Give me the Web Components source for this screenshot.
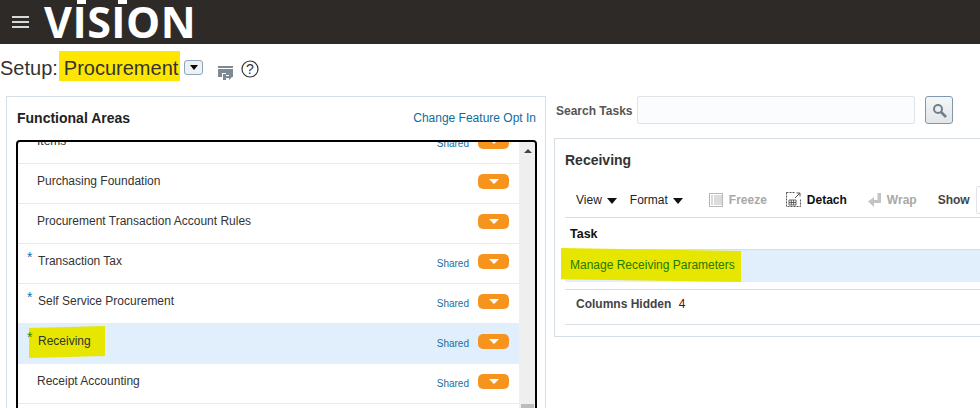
<!DOCTYPE html>
<html>
<head>
<meta charset="utf-8">
<title>Setup: Procurement</title>
<style>
  html, body { margin: 0; height: 408px; overflow: hidden; background: #fff; }
  body { font-family: "Liberation Sans", Arial, sans-serif; }
  .main { display: grid; grid-template-columns: 540px 426px; column-gap: 8px; padding-left: 6px; }
</style>
</head>
<body>
<app-header></app-header>
<page-title></page-title>
<div class="main">
  <functional-areas>
    <area-row name="Items" shared></area-row>
    <area-row name="Purchasing Foundation"></area-row>
    <area-row name="Procurement Transaction Account Rules"></area-row>
    <area-row name="Transaction Tax" star shared></area-row>
    <area-row name="Self Service Procurement" star shared></area-row>
    <area-row name="Receiving" star shared selected></area-row>
    <area-row name="Receipt Accounting" shared></area-row>
  </functional-areas>
  <task-panel></task-panel>
</div>

<script>
class AppHeader extends HTMLElement {
  constructor() {
    super();
    this.attachShadow({ mode: "open" });
    this.shadowRoot.innerHTML = `
      <style>
        :host { display: flex; align-items: center; height: 44px; background: #2e2a27; overflow: hidden; }
        svg { margin-left: 12px; flex: none; }
        .logo {
          position: relative; margin-left: 15px; color: #fff; height: 44px; box-sizing: border-box; padding-top: 4px;
          font: 700 43px/36px "Open Sans", sans-serif; letter-spacing: 0.5px;
        }
        .dot { position: absolute; top: 0; width: 9px; height: 4px; background: #fff; }
      </style>
      <svg width="17" height="12" viewBox="0 0 17 12" fill="#d8d8d8">
        <rect width="17" height="2" y="0"/><rect width="17" height="2" y="5"/><rect width="17" height="2" y="10"/>
      </svg>
      <div class="logo">VISION<span class="dot" style="left:33px"></span><span class="dot" style="left:74px"></span></div>
    `;
  }
}

class PageTitle extends HTMLElement {
  constructor() {
    super();
    this.attachShadow({ mode: "open" });
    this.shadowRoot.innerHTML = `
      <style>
        :host {
          display: flex; align-items: center; height: 44px; padding-bottom: 8px;
          font-size: 20px; color: #333;
        }
        .label { padding-top: 4px; }
        .mark { background: #ffe600; height: 30px; line-height: 34px; padding: 0 2px 0 5px; margin: 0 4px 0 1px; }
        .drop {
          width: 17px; height: 13px; border: 1px solid #8fa5b8; border-radius: 3px; background: #eef1f4;
          display: flex; align-items: center; justify-content: center; margin-top: 3px;
        }
        .drop i { border: 4.5px solid transparent; border-top: 5px solid #000; border-bottom: 0; }
        svg { flex: none; }
      </style>
      <span class="label">Setup:</span><span class="mark">Procurement</span>
      <span class="drop"><i></i></span>
      <svg style="margin:14px 0 0 15px" width="15" height="15" viewBox="0 0 15 15">
        <path d="M0 0h15v2H0zM0 3h15v8h-4V9H8V7H4v4H0z" fill="#7d8a94"/>
        <path d="M5 8h3v2h3V8l3 3-3 3v-2H8v2H5z" fill="#7d8a94"/>
      </svg>
      <svg style="margin:6px 0 0 8px" width="18" height="18" viewBox="0 0 18 18">
        <circle cx="9" cy="9" r="8" fill="none" stroke="#333" stroke-width="1.2"/>
        <text x="9" y="14" text-anchor="middle" font-size="14" fill="#333" font-family="Liberation Sans">?</text>
      </svg>
    `;
  }
}

class FunctionalAreas extends HTMLElement {
  constructor() {
    super();
    this.attachShadow({ mode: "open" });
    this.shadowRoot.innerHTML = `
      <style>
        :host {
          display: block; height: 312px; border: 1px solid #d6dfe6; border-bottom: 0;
          box-sizing: border-box; padding: 0 9px;
        }
        .head { display: flex; justify-content: space-between; align-items: center; height: 41px; padding-bottom: 2px; }
        h2 { margin: 0 0 0 1px; font-size: 14px; color: #222; }
        a { font-size: 12px; color: #0d6e9e; }
        .box {
          display: flex; width: 521px; height: 268px; box-sizing: border-box;
          border: 2px solid #000; border-bottom: 0; border-radius: 4px 4px 0 0; overflow: hidden;
        }
        .rows { width: 501px; flex: none; }
        ::slotted(area-row:first-child) { margin-top: -18px; }
        .bar { flex: 1; background: #efefef; position: relative; }
        .up {
          position: absolute; top: 7px; left: 5px;
          border: 4px solid transparent; border-bottom: 4px solid #444; border-top: 0;
        }
        .thumb { position: absolute; top: 262px; left: 2px; right: 1px; height: 4px; background: #bcbcbc; }
      </style>
      <div class="head"><h2>Functional Areas</h2><a>Change Feature Opt In</a></div>
      <div class="box">
        <div class="rows"><slot></slot></div>
        <div class="bar"><span class="up"></span><span class="thumb"></span></div>
      </div>
    `;
  }
}

class AreaRow extends HTMLElement {
  constructor() {
    super();
    this.attachShadow({ mode: "open" });
  }

  connectedCallback() {
    const star = this.hasAttribute("star");
    const selected = this.hasAttribute("selected");
    this.shadowRoot.innerHTML = `
      <style>
        :host {
          display: flex; position: relative; align-items: center; height: 40px; box-sizing: border-box;
          border-bottom: 1px solid #e8ebee; padding: 0 10px 5px 19px; font-size: 12px; color: #333;
        }
        :host([selected]) { background: #e1eefb; border-bottom-color: #e1eefb; box-shadow: 0 -1px 0 #e1eefb; }
        .star { position: absolute; left: 9px; top: 5px; color: #0a74b8; font-size: 14px; z-index: 1; }
        :host([selected]) .star { color: #2c8a00; }
        .name { flex: 1; position: relative; z-index: 1; }
        :host([star]) .name { padding-left: 1px; }
        .marker {
          position: absolute; left: 11px; top: 2px; width: 76px; height: 32px; background: #e6e600;
          clip-path: polygon(0 2px, 100% 0, 100% 94%, 0 100%);
        }
        .shared { font-size: 10px; color: #1b6f9e; margin: 4px 9px 0 0; }
        .menu {
          width: 31px; height: 15px; border-radius: 5px; background: #f7941e; flex: none;
          display: flex; align-items: center; justify-content: center;
        }
        .menu i { border: 5px solid transparent; border-top: 5px solid #fff; border-bottom: 0; }
      </style>
      ${selected ? '<span class="marker"></span>' : ""}
      ${star ? '<span class="star">*</span>' : ""}
      <span class="name">${this.getAttribute("name")}</span>
      ${this.hasAttribute("shared") ? '<span class="shared">Shared</span>' : ""}
      <span class="menu"><i></i></span>
    `;
  }
}

class TaskPanel extends HTMLElement {
  constructor() {
    super();
    this.attachShadow({ mode: "open" });
    this.shadowRoot.innerHTML = `
      <style>
        :host { display: block; font-size: 12px; color: #444; min-width: 0; }
        .search { display: flex; align-items: center; height: 28px; margin-left: 2px; }
        .search b { width: 81px; color: #555; padding-top: 1px; }
        .search .field { width: 276px; height: 26px; border: 1px solid #dfe4ea; border-radius: 2px; background: #fbfcfe; }
        .search .go {
          width: 26px; height: 26px; margin-left: 10px; border: 1px solid #7f98ae; border-radius: 3px;
          background: linear-gradient(#f4f6f7, #e2e6e9); display: flex; align-items: center; justify-content: center;
        }
        .panel {
          margin-top: 14px; height: 197px; border: 1px solid #d6dfe6; border-right: 0; padding: 0 0 0 10px; overflow: hidden;
        }
        h2 { margin: 0; font-size: 14px; color: #333; height: 43px; line-height: 43px; }
        .tools {
          display: flex; align-items: center; height: 35px; border-bottom: 1px solid #d6dfe6; font-size: 12px; color: #222;
          padding-left: 11px; white-space: nowrap; overflow: hidden;
        }
        .tri { border: 5px solid transparent; border-top: 6px solid #111; border-bottom: 0; margin: 2px 13px 0 5px; }
        .off { color: #a8a8a8; font-weight: 700; }
        .tools svg { flex: none; }
        .show { flex: none; width: 12px; height: 26px; border: 1px solid #dfe4ea; border-radius: 2px; margin-left: 6px; }
        .th { height: 31px; line-height: 32px; font-weight: 700; color: #111; font-size: 12.5px; padding-left: 5px; }
        .row {
          position: relative; height: 32px; line-height: 31px; background: #e1eefb; border-top: 1px solid #d6dfe6;
          padding-left: 5px; color: #1d7a00;
        }
        .row span { position: relative; z-index: 1; }
        .marker {
          position: absolute; left: -4px; top: -2px; width: 180px; height: 34px; background: #e6e600;
          clip-path: polygon(0 0, 100% 3px, 100% 100%, 0 92%);
        }
        .foot {
          margin-top: 7px; height: 34px; line-height: 28px; border-top: 1px solid #d6dfe6; border-bottom: 1px solid #d6dfe6;
          padding-left: 11px;
        }
        .foot em { font-style: normal; color: #7a0000; margin-left: 4px; }
      </style>
      <div class="search">
        <b>Search Tasks</b>
        <span class="field"></span>
        <span class="go">
          <svg width="15" height="15" viewBox="0 0 15 15" fill="none" stroke="#6f7f8c">
            <circle cx="6" cy="6" r="4" stroke-width="2"/>
            <path d="M9 9l5 5" stroke-width="2.6"/>
          </svg>
        </span>
      </div>
      <div class="panel">
        <h2>Receiving</h2>
        <div class="tools">
          <span>View</span><i class="tri"></i>
          <span>Format</span><i class="tri" style="margin-right:26px"></i>
          <svg width="14" height="14" viewBox="0 0 14 14" fill="none" stroke="#b8b8b8">
            <rect x=".5" y=".5" width="13" height="13"/><path d="M3 2v10M6 2v10M8 2v10M10 2v10M12 2v10"/>
          </svg>
          <span class="off" style="margin:0 19px 0 6px">Freeze</span>
          <svg width="15" height="15" viewBox="0 0 15 15" fill="none" stroke="#555">
            <path d="M.5 .5h8M.5 .5v14h14v-8" stroke-dasharray="2 1"/><path d="M9 6l5-5M10.500 1h3.500v3.500"/>
            <path d="M3 8h7v5H3zM3 10.500h7M5.300 8v5M7.600 8v5" stroke-width=".9"/>
          </svg>
          <b style="margin:0 21px 0 6px;color:#111">Detach</b>
          <svg width="13" height="14" viewBox="0 0 13 14" fill="#c4c4c4"><path d="M9.500 0H13v10H6v4L0 8.500 6 4v3h3.500z"/></svg>
          <span class="off" style="margin:0 21px 0 6px">Wrap</span>
          <b style="color:#444">Show</b><span class="show"></span>
        </div>
        <div class="th">Task</div>
        <div class="row"><i class="marker"></i><span>Manage Receiving Parameters</span></div>
        <div class="foot"><b>Columns Hidden</b> <em>4</em></div>
      </div>
    `;
  }
}

customElements.define("app-header", AppHeader);
customElements.define("page-title", PageTitle);
customElements.define("functional-areas", FunctionalAreas);
customElements.define("area-row", AreaRow);
customElements.define("task-panel", TaskPanel);
</script>
</body>
</html>
